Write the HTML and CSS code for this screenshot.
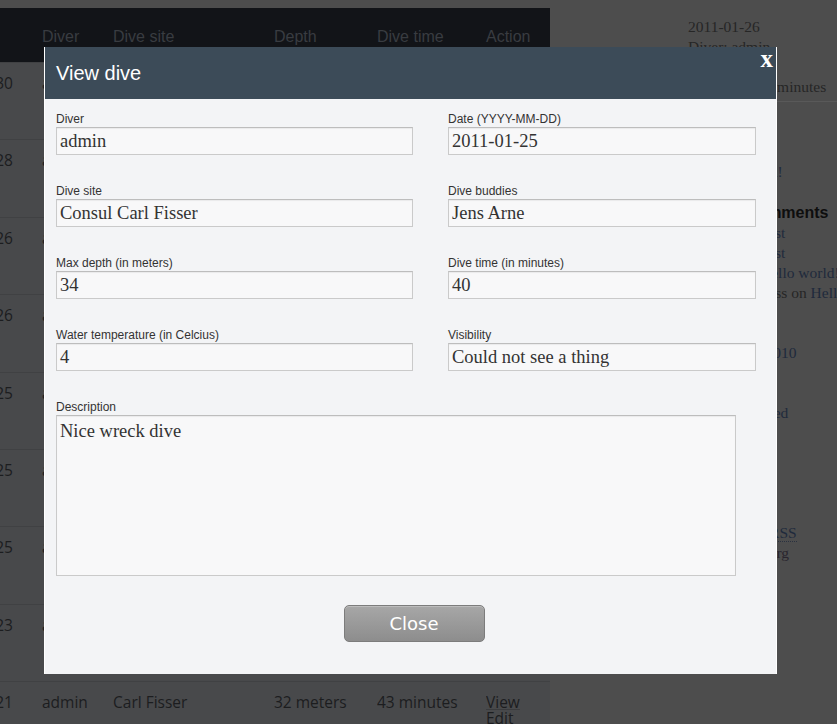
FILE: index.html
```html
<!DOCTYPE html>
<html lang="en">
<head>
<meta charset="utf-8">
<title>View dive</title>
<link rel="stylesheet" href="styles.css">
</head>
<body>
<div class="page">
  <div class="main">
    <div class="dives">
      <div class="dives-head">
        <span></span><span>Diver</span><span>Dive site</span><span>Depth</span><span>Dive time</span><span>Action</span>
      </div>
      <div class="dive-row"><span class="c-date">2011-01-30</span><span>admin</span><span>Consul Carl Fisser</span><span>34 meters</span><span>40 minutes</span><span class="c-act"><a>View</a><a>Edit</a></span></div>
      <div class="dive-row"><span class="c-date">2011-01-28</span><span>admin</span><span>Gulen</span><span>28 meters</span><span>35 minutes</span><span class="c-act"><a>View</a><a>Edit</a></span></div>
      <div class="dive-row"><span class="c-date">2011-01-26</span><span>admin</span><span>Frederik</span><span>22 meters</span><span>45 minutes</span><span class="c-act"><a>View</a><a>Edit</a></span></div>
      <div class="dive-row"><span class="c-date">2011-01-26</span><span>admin</span><span>Parat</span><span>18 meters</span><span>50 minutes</span><span class="c-act"><a>View</a><a>Edit</a></span></div>
      <div class="dive-row"><span class="c-date">2011-01-25</span><span>admin</span><span>Consul Carl Fisser</span><span>34 meters</span><span>40 minutes</span><span class="c-act"><a>View</a><a>Edit</a></span></div>
      <div class="dive-row"><span class="c-date">2011-01-25</span><span>admin</span><span>Gulen</span><span>30 meters</span><span>38 minutes</span><span class="c-act"><a>View</a><a>Edit</a></span></div>
      <div class="dive-row"><span class="c-date">2011-01-25</span><span>admin</span><span>Frederik</span><span>25 meters</span><span>41 minutes</span><span class="c-act"><a>View</a><a>Edit</a></span></div>
      <div class="dive-row"><span class="c-date">2011-01-23</span><span>admin</span><span>Parat</span><span>20 meters</span><span>47 minutes</span><span class="c-act"><a>View</a><a>Edit</a></span></div>
      <div class="dive-row"><span class="c-date">2011-01-21</span><span>admin</span><span>Carl Fisser</span><span>32 meters</span><span>43 minutes</span><span class="c-act"><a>View</a><a>Edit</a></span></div>
    </div>
  </div>
  <aside class="sidebar">
    <div class="entry">
      <div>2011-01-26</div>
      <div>Diver: admin</div>
      <div>Depth: 22 m</div>
      <div>Dive time: 40 minutes</div>
    </div>
    <ul class="list recent"><li><a>Hello world!</a></li></ul>
    <h3 class="widget-title first">Recent Comments</h3>
    <ul class="list">
      <li>admin on <a>Test</a></li>
      <li>admin on <a>Test</a></li>
      <li>admin on <a>Hello world!</a></li>
      <li>Mr WordPress on <a>Hello world!</a></li>
    </ul>
    <h3 class="widget-title">Archives</h3>
    <ul class="list"><li><a>December 2010</a></li></ul>
    <h3 class="widget-title">Categories</h3>
    <ul class="list"><li><a>Uncategorized</a></li></ul>
    <h3 class="widget-title">Meta</h3>
    <ul class="list">
      <li><a>Site Admin</a></li>
      <li><a>Log out</a></li>
      <li><a>Entries <abbr>RSS</abbr></a></li>
      <li><a>Comments <abbr>RSS</abbr></a></li>
      <li class="plain">WordPress.org</li>
    </ul>
  </aside>
</div>

<div class="modal">
  <div class="modal-head">
    <span class="modal-title">View dive</span>
    <span class="modal-x">x</span>
  </div>
  <div class="modal-body">
    <div class="fields">
      <div class="field"><div class="lbl">Diver</div><div class="inp">admin</div></div>
      <div class="field"><div class="lbl">Date (YYYY-MM-DD)</div><div class="inp">2011-01-25</div></div>
      <div class="field"><div class="lbl">Dive site</div><div class="inp">Consul Carl Fisser</div></div>
      <div class="field"><div class="lbl">Dive buddies</div><div class="inp">Jens Arne</div></div>
      <div class="field"><div class="lbl">Max depth (in meters)</div><div class="inp">34</div></div>
      <div class="field"><div class="lbl">Dive time (in minutes)</div><div class="inp">40</div></div>
      <div class="field"><div class="lbl">Water temperature (in Celcius)</div><div class="inp">4</div></div>
      <div class="field"><div class="lbl">Visibility</div><div class="inp">Could not see a thing</div></div>
      <div class="field wide"><div class="lbl">Description</div><div class="area">Nice wreck dive</div></div>
    </div>
    <div class="btn-row"><span class="btn">Close</span></div>
  </div>
</div>
</body>
</html>
```

FILE: styles.css
```css
html, body {
  margin: 0;
  padding: 0;
}
body {
  background: #4d4d4d;
  width: 837px;
  height: 724px;
  overflow: hidden;
  position: relative;
}
.page {
  display: flex;
  align-items: flex-start;
}
.main {
  width: 550px;
  flex: none;
  padding-top: 8px;
}
.dives {
  background: #48494b;
  font-family: "Open Sans", sans-serif;
  font-size: 15.5px;
  line-height: 20px;
  color: #1c1d1f;
}
.dives-head,
.dive-row {
  display: grid;
  grid-template-columns: 42px 71px 161px 103px 109px 64px;
  white-space: nowrap;
}
.dives-head {
  height: 54px;
  box-sizing: border-box;
  padding-top: 19px;
  background: #121418;
  color: #393c41;
  font-family: "Liberation Sans", Arial, sans-serif;
  font-size: 16px;
}
.dive-row {
  height: 77.375px;
  box-sizing: border-box;
  padding-top: 10px;
  border-top: 1px solid #404143;
}
.dive-row:first-of-type { border-top-color: #48494b; }
.dive-row > span { overflow: hidden; }
.c-date {
  display: flex;
  justify-content: flex-end;
  padding-right: 29px;
}
.c-act {
  display: flex;
  flex-direction: column;
  align-items: flex-start;
  padding-top: 2px;
  line-height: 16px;
}
.c-act a {
  text-decoration: underline;
  text-decoration-color: #3a3b3d;
}

.sidebar {
  margin-left: 138px;
  width: 149px;
  flex: none;
  padding-top: 17px;
  font-family: "Liberation Serif", "Times New Roman", serif;
  font-size: 15.5px;
  line-height: 20px;
  color: #262626;
  white-space: nowrap;
}
.entry {
  padding-bottom: 4px;
  border-bottom: 1px solid #595959;
}
.list {
  list-style: none;
  margin: 0;
  padding: 0 0 0 10px;
}
.list a { color: #1f2a3c; }
.list .plain { color: #29252e; }
.list abbr {
  text-decoration: none;
  border-bottom: 1px dotted #2a3140;
}
.recent {
  margin-top: 60px;
  padding-left: 15px;
}
.widget-title {
  margin: 20px 0 0;
  font-family: "Liberation Sans", Arial, sans-serif;
  font-size: 16px;
  line-height: 20px;
  font-weight: bold;
  color: #0e0e0e;
}
.widget-title.first { margin-top: 21px; }

.modal {
  position: absolute;
  left: 44px;
  top: 47px;
  width: 733px;
  box-sizing: border-box;
  border-left: 1px solid #ffffff;
  border-right: 1px solid #ffffff;
  background: #f3f4f6;
}
.modal-head {
  position: relative;
  height: 52px;
  display: flex;
  align-items: center;
  padding-left: 11px;
  background: #3c4b58;
}
.modal-title {
  font-family: "Liberation Sans", Arial, sans-serif;
  font-size: 20px;
  color: #ffffff;
}
.modal-x {
  position: absolute;
  right: 3px;
  top: -1px;
  font-family: "Liberation Serif", serif;
  font-weight: bold;
  font-size: 25px;
  line-height: 26px;
  color: #ffffff;
}
.modal-body {
  padding: 13px 0 32px 11px;
}
.fields {
  display: grid;
  grid-template-columns: 357px 308px;
  column-gap: 35px;
  row-gap: 29px;
}
.field.wide { grid-column: 1 / 3; }
.lbl {
  font-family: "Liberation Sans", Arial, sans-serif;
  font-size: 12px;
  line-height: 14px;
  color: #333333;
  margin-bottom: 1px;
}
.inp,
.area {
  box-sizing: border-box;
  border: 1px solid #cacaca;
  border-top-color: #bdbdbd;
  background: #f8f8f9;
  box-shadow: inset 0 1px 1px rgba(0, 0, 0, 0.06);
  font-family: "Liberation Serif", "Times New Roman", serif;
  font-size: 18.5px;
  color: #333333;
  padding: 0 3px;
}
.inp {
  height: 28px;
  display: flex;
  align-items: center;
}
.area {
  width: 680px;
  height: 161px;
  padding-top: 4px;
  line-height: 22px;
}
.btn-row {
  margin-top: 29px;
  display: flex;
  justify-content: center;
  padding-right: 4px;
}
.btn {
  width: 141px;
  height: 37px;
  box-sizing: border-box;
  border: 1px solid #7c7c7c;
  border-radius: 5px;
  background: linear-gradient(#a7a7a7, #8d8d8d);
  box-shadow: inset 0 1px 0 rgba(255, 255, 255, 0.25);
  display: flex;
  align-items: center;
  justify-content: center;
  font-family: "DejaVu Sans", sans-serif;
  font-size: 18px;
  color: #ffffff;
}
```
